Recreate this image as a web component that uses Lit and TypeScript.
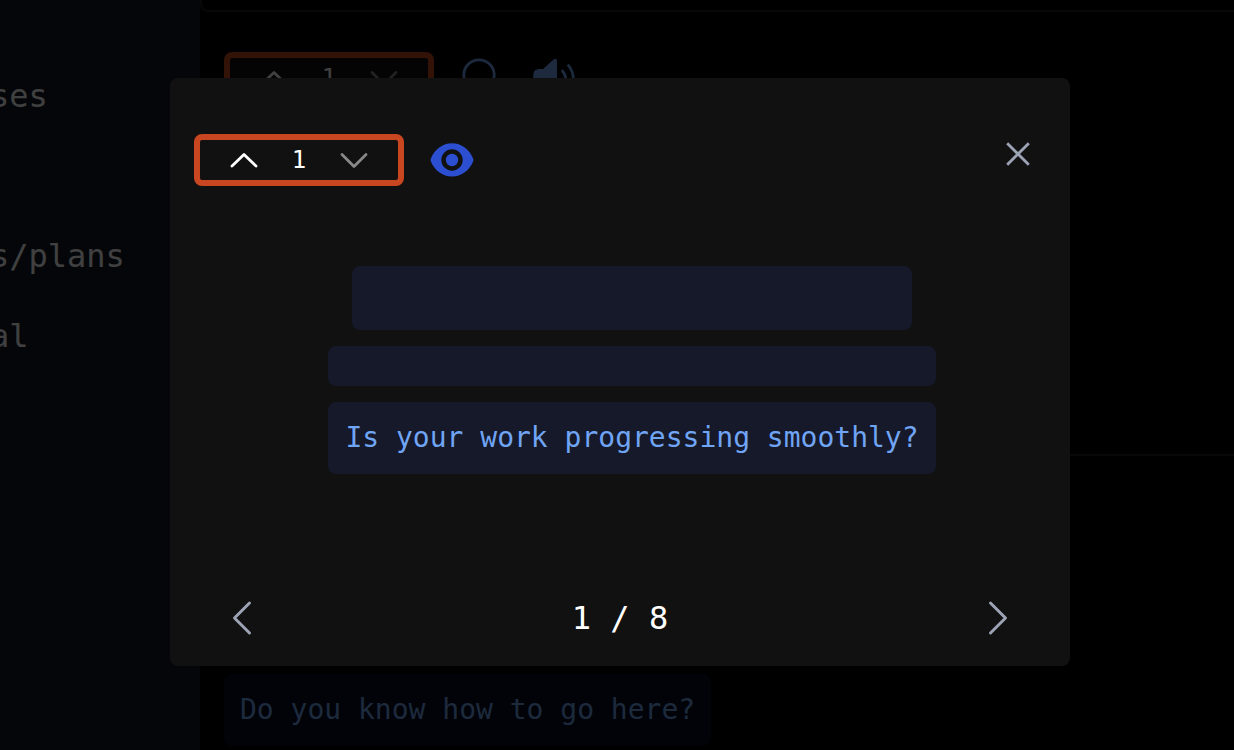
import { LitElement, html, css, svg } from "lit";
import { customElement, property, state } from "lit/decorators.js";

const icons = {
  up: svg`<path d="M2 14 14 2.500l12 11.500" fill="none" stroke="currentColor" stroke-width="2.8" stroke-linecap="round" stroke-linejoin="round" />`,
  down: svg`<path d="m2 2.500 12 12 12-12" fill="none" stroke="currentColor" stroke-width="2.8" stroke-linecap="round" stroke-linejoin="round" />`,
};

@customElement("line-stepper")
export class LineStepper extends LitElement {
  @property({ type: Number }) value = 1;

  static styles = css`
    :host {
      display: block;
    }
    .stepper {
      box-sizing: border-box;
      display: grid;
      grid-template-columns: 28px 1fr 28px;
      align-items: center;
      width: 210px;
      height: 52px;
      padding: 0 30px;
      border: 6px solid #c94720;
      border-radius: 8px;
      background: #111;
      color: #fff;
      font: 24px/32px "DejaVu Sans Mono", monospace;
      text-align: center;
    }
    button {
      display: flex;
      padding: 0;
      border: 0;
      background: none;
      color: inherit;
      cursor: pointer;
    }
    button:disabled {
      color: #888;
    }
  `;

  render() {
    return html`<div class="stepper" role="group" aria-label="Line count">
      <button aria-label="Increase" @click=${() => this.value++}>
        <svg width="28" height="17" viewBox="0 0 28 17">${icons.up}</svg>
      </button>
      <output>${this.value}</output>
      <button aria-label="Decrease" ?disabled=${this.value <= 1} @click=${() => this.value--}>
        <svg width="28" height="17" viewBox="0 0 28 17">${icons.down}</svg>
      </button>
    </div>`;
  }
}

@customElement("app-root")
export class AppRoot extends LitElement {
  @state() private page = 1;
  private total = 8;

  static styles = css`
    :host {
      display: block;
      position: relative;
      height: 100vh;
      overflow: hidden;
      background: #000;
      color: #fff;
      font: 32px/40px "DejaVu Sans Mono", monospace;
    }
    .shell {
      display: grid;
      grid-template-columns: 200px 1fr;
      height: 100%;
    }
    .sidebar {
      overflow: hidden;
      background: #111827;
    }
    .nav {
      display: flex;
      flex-direction: column;
      gap: 40px;
      margin: 76px 0 0 -10px;
      padding: 0;
      list-style: none;
    }
    .nav li {
      height: 40px;
    }
    .nav a {
      color: inherit;
      text-decoration: none;
    }
    .main {
      display: flex;
      flex-direction: column;
      min-width: 0;
    }
    .card {
      box-sizing: border-box;
      flex: none;
      border: 2px solid #222;
      border-width: 0 0 2px 2px;
      border-radius: 0 0 0 8px;
    }
    .card-prev {
      height: 12px;
    }
    .card-current {
      height: 444px;
      padding: 40px 22px;
      border-left-color: transparent;
    }
    .card-next {
      border: 0;
      padding: 218px 24px 0;
    }
    .tools {
      display: flex;
      align-items: center;
      gap: 24px;
    }
    .dim-tools {
      color: #74a8f2;
    }
    .phrase {
      display: inline-block;
      box-sizing: border-box;
      padding: 16px;
      border-radius: 8px;
      background: #060c20;
      color: #70a6f0;
      font-size: 28px;
      line-height: 40px;
    }
    .overlay {
      position: absolute;
      inset: 0;
      display: flex;
      align-items: center;
      justify-content: center;
      padding: 0 0 6px 6px;
      background: rgba(0, 0, 0, 0.75);
    }
    .modal {
      box-sizing: border-box;
      display: flex;
      flex-direction: column;
      width: 900px;
      max-width: 100%;
      padding: 56px 24px 24px;
      border-radius: 8px;
      background: #111;
    }
    .head {
      display: flex;
      align-items: center;
      justify-content: space-between;
    }
    .icon {
      display: flex;
      align-items: center;
      justify-content: center;
      width: 48px;
      height: 48px;
      padding: 0;
      border: 0;
      background: none;
      color: #9ca3b4;
      cursor: pointer;
    }
    .close {
      align-self: flex-start;
      height: 40px;
      margin-right: 4px;
    }
    .eye {
      color: #2b4fd0;
    }
    .dim {
      color: inherit;
    }
    .lines {
      display: grid;
      gap: 16px;
      width: 608px;
      max-width: 100%;
      margin: 80px 0 0 134px;
    }
    .line {
      box-sizing: border-box;
      min-height: 40px;
      border-radius: 8px;
      background: #151929;
      color: #70a4f4;
      font-size: 28px;
      line-height: 40px;
      text-align: center;
    }
    .title {
      height: 64px;
      margin: 0 24px;
    }
    .text {
      padding: 16px 0;
    }
    .pager {
      display: flex;
      align-items: center;
      justify-content: space-between;
      margin-top: 120px;
      padding: 0 24px;
    }
  `;

  render() {
    return html`
      <div class="shell">
        <nav class="sidebar">
          <ul class="nav">
            <li><a href="#ses">ses</a></li>
            <li></li>
            <li><a href="#plans">s/plans</a></li>
            <li><a href="#al">al</a></li>
          </ul>
        </nav>
        <main class="main">
          <section class="card card-prev"></section>
          <section class="card card-current">
            <div class="tools dim-tools">
              <line-stepper></line-stepper>
              <button class="icon dim" aria-label="Search">
                <svg width="48" height="48" viewBox="0 0 48 48" fill="none" stroke="currentColor" stroke-width="2.8">
                  <circle cx="21" cy="21" r="15.200" />
                  <path d="m32 32 9 9" stroke-linecap="round" />
                </svg>
              </button>
              <button class="icon dim" aria-label="Play audio">
                <svg width="48" height="48" viewBox="0 0 48 48" fill="none" stroke="currentColor" stroke-width="2.8" stroke-linecap="round">
                  <path d="M3.300 21q0-6 6-6H13L23.500 5.500Q27 3.500 27 7v34q0 3.500-3.500 1.500L13 33H9.300q-6 0-6-6z" fill="currentColor" stroke="none" />
                  <path d="M32.500 17q6 7 0 14M38.500 11.500q9.500 12.500 0 25" />
                </svg>
              </button>
            </div>
          </section>
          <section class="card card-next">
            <div class="phrase">Do you know how to go here?</div>
          </section>
        </main>
      </div>
      <div class="overlay">
        <div class="modal" role="dialog" aria-modal="true" aria-label="Phrase practice">
          <header class="head">
            <div class="tools">
              <line-stepper></line-stepper>
              <button class="icon eye" aria-label="Show phrase">
                <svg width="48" height="48" viewBox="0 0 48 48" fill="currentColor">
                  <path fill-rule="evenodd" d="M2.900 22.400C6.500 13.500 14.500 7.300 24 7.300s17.500 6.200 21.100 15.100q.7 1.600 0 3.200C41.500 34.500 33.500 40.600 24 40.600S6.500 34.500 2.900 25.600q-.7-1.600 0-3.200zM24 13.300a10.700 10.700 0 1 0 0 21.400 10.700 10.700 0 0 0 0-21.400z" />
                  <circle cx="24" cy="24" r="6.200" />
                </svg>
              </button>
            </div>
            <button class="icon close" aria-label="Close">
              <svg width="24" height="24" viewBox="0 0 24 24" fill="none" stroke="currentColor" stroke-width="2.800">
                <path d="m1.200 1.200 21.600 21.600M22.800 1.200 1.200 22.800" />
              </svg>
            </button>
          </header>
          <div class="lines">
            <div class="line title"></div>
            <div class="line"></div>
            <div class="line text">Is your work progressing smoothly?</div>
          </div>
          <footer class="pager">
            <button class="icon" aria-label="Previous" @click=${() => (this.page = Math.max(1, this.page - 1))}>
              <svg width="48" height="48" viewBox="0 0 48 48" fill="none" stroke="currentColor" stroke-width="3" stroke-linecap="round" stroke-linejoin="round">
                <path d="M31.500 9 16.500 24l15 15" />
              </svg>
            </button>
            <span>${this.page} / ${this.total}</span>
            <button class="icon" aria-label="Next" @click=${() => (this.page = Math.min(this.total, this.page + 1))}>
              <svg width="48" height="48" viewBox="0 0 48 48" fill="none" stroke="currentColor" stroke-width="3" stroke-linecap="round" stroke-linejoin="round">
                <path d="m16.500 9 15 15-15 15" />
              </svg>
            </button>
          </footer>
        </div>
      </div>
    `;
  }
}
